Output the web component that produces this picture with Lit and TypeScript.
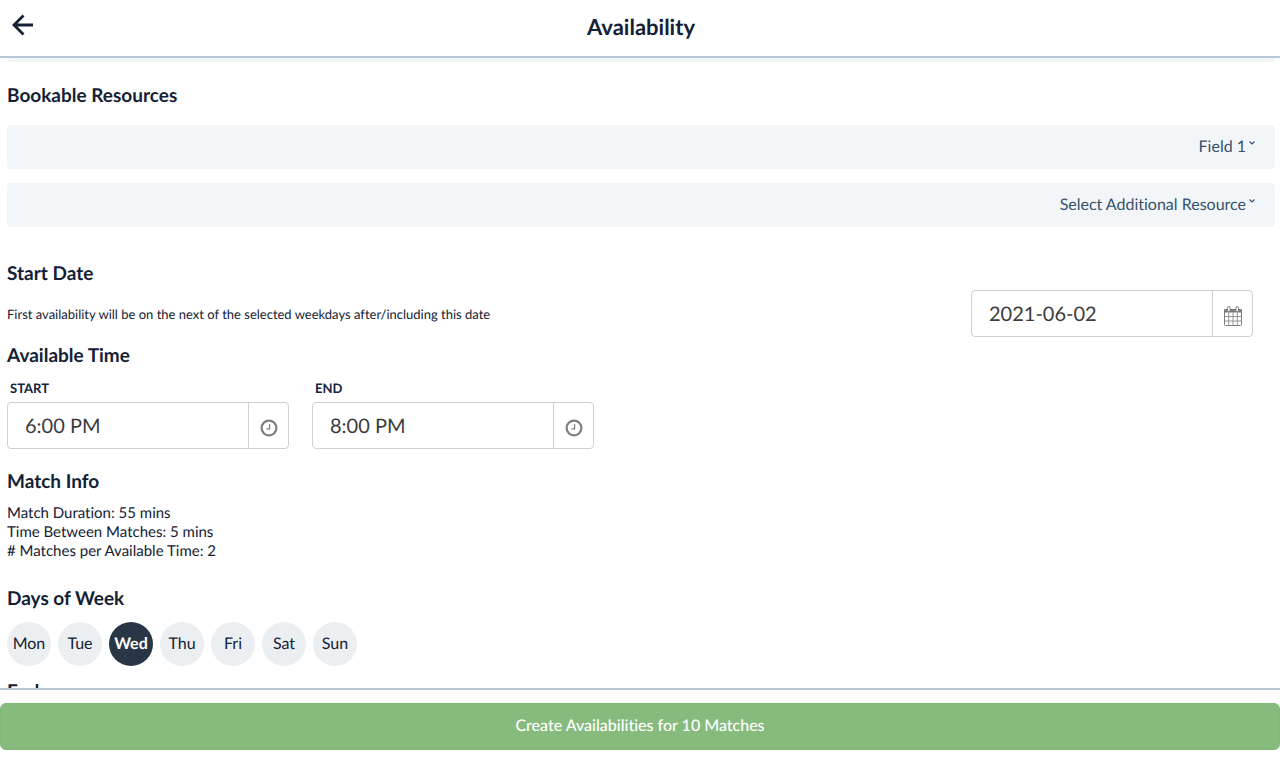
import { LitElement, html, css } from "lit";
import { customElement, property, state } from "lit/decorators.js";
import { classMap } from "lit/directives/class-map.js";

const calendarIcon = html`<svg class="glyph" viewBox="0 0 20 22" width="20" height="22" aria-hidden="true">
  <rect x="1.5" y="4.5" width="17" height="16" rx="1" fill="#fff" stroke="#7b7b7b" />
  <path d="M1 4.5h18v3H1z" fill="#7b7b7b" />
  <path d="M5.7 7.5v13M10 7.5v13M14.3 7.5v13M1.5 11.5h17M1.5 16h17" stroke="#8c8c8c" stroke-width="0.9" fill="none" />
  <rect x="4.5" y="1.5" width="2.6" height="5" rx="1.2" fill="#fff" stroke="#7b7b7b" />
  <rect x="12.9" y="1.5" width="2.6" height="5" rx="1.2" fill="#fff" stroke="#7b7b7b" />
</svg>`;

const clockIcon = html`<svg class="glyph" viewBox="0 0 18 18" width="18" height="18" aria-hidden="true">
  <circle cx="9" cy="9" r="7.4" fill="none" stroke="#7d7d7d" stroke-width="2.2" />
  <path d="M9.6 5v4.8H6.4" fill="none" stroke="#7d7d7d" stroke-width="1.2" />
</svg>`;

@customElement("picker-field")
class PickerField extends LitElement {
  @property() label = "";
  @property() value = "";
  @property() kind: "date" | "time" = "time";
  @property({ type: Boolean }) quiet = false;

  static styles = css`
    :host {
      display: block;
      width: 282px;
    }
    .caption {
      display: block;
      padding-left: 3px;
      margin-bottom: 5px;
      font-size: 13px;
      font-weight: 700;
      line-height: 18px;
      color: #14213a;
    }
    .group {
      display: flex;
      height: 47px;
      box-sizing: border-box;
      border: 1px solid #d0d0d0;
      border-radius: 4px;
      background: #fff;
      overflow: hidden;
    }
    .value {
      flex: 1;
      min-width: 0;
      box-sizing: border-box;
      border: 0;
      padding: 0 17px;
      font: 400 20px/24px Lato, sans-serif;
      text-rendering: geometricPrecision;
      color: #3c3c3c;
      background: none;
      outline-offset: -2px;
    }
    .open {
      display: flex;
      align-items: center;
      justify-content: center;
      width: 40px;
      padding: 5px 0 0;
      border: 0;
      border-left: 1px solid #d0d0d0;
      background: none;
      cursor: pointer;
    }
    .glyph {
      display: block;
    }
  `;

  render() {
    return html`
      ${this.quiet ? null : html`<label class="caption" for="value">${this.label}</label>`}
      <div class="group">
        <input class="value" id="value" type="text" .value=${this.value} aria-label=${this.label} />
        <button class="open" type="button" aria-label="Choose ${this.kind}">
          ${this.kind === "date" ? calendarIcon : clockIcon}
        </button>
      </div>
    `;
  }
}

@customElement("resource-select")
class ResourceSelect extends LitElement {
  @property() label = "";
  @property({ type: Array }) options: string[] = [];

  static styles = css`
    :host {
      display: block;
    }
    .box {
      display: grid;
      align-items: center;
      border-radius: 4px;
      background: #f2f6f9;
    }
    .choice {
      grid-area: 1 / 1;
      width: 100%;
      height: 44px;
      box-sizing: border-box;
      appearance: none;
      border: 0;
      border-radius: 4px;
      padding: 0 29px 0 16px;
      background: none;
      color: #36506f;
      font: 400 16px/24px Lato, sans-serif;
      font-variant-ligatures: none;
      text-rendering: geometricPrecision;
      text-align: right;
      text-align-last: right;
    }
    .caret {
      grid-area: 1 / 1;
      justify-self: end;
      margin: 0 20px 8px 0;
      pointer-events: none;
    }
  `;

  render() {
    return html`<div class="box">
      <select class="choice" aria-label=${this.label}>
        ${this.options.map((o) => html`<option>${o}</option>`)}
      </select>
      <svg class="caret" viewBox="0 0 6 4" width="6" height="4" aria-hidden="true">
        <path d="M0.5 0.5 3 3 5.5 0.5" fill="none" stroke="#36506f" stroke-width="1.1" />
      </svg>
    </div>`;
  }
}

@customElement("app-root")
class AppRoot extends LitElement {
  @state() private selected = new Set(["Wed"]);

  private days = ["Mon", "Tue", "Wed", "Thu", "Fri", "Sat", "Sun"];

  static styles = css`
    :host {
      display: flex;
      flex-direction: column;
      height: 100vh;
      overflow: hidden;
      background: #fff;
      color: #142135;
      font-family: Lato, sans-serif;
      font-size: 16px;
      font-variant-ligatures: none;
      text-rendering: geometricPrecision;
    }
    .top {
      display: grid;
      grid-template-columns: 44px 1fr 42px;
      align-items: center;
      height: 56px;
      flex: none;
      border-bottom: 2px solid #b9c8d6;
    }
    .back {
      display: block;
      padding: 0 0 6px 11px;
      border: 0;
      background: none;
      cursor: pointer;
    }
    .arrow {
      display: block;
    }
    .title {
      margin: 0;
      padding-bottom: 3px;
      text-align: center;
      font-size: 22px;
      font-weight: 700;
      line-height: 28px;
    }
    .content {
      flex: 1;
      min-height: 0;
      overflow: hidden;
      padding: 0 5px 0 7px;
    }
    .previous {
      height: 4px;
      border-radius: 0 0 4px 4px;
      background: #f2f6f9;
    }
    .heading {
      margin: 0;
      font-size: 19px;
      font-weight: 700;
      line-height: 24px;
    }
    .resources {
      display: grid;
      gap: 14px;
      padding: 22px 0 35px;
    }
    .resources .heading {
      margin-bottom: 3px;
    }
    .start {
      display: flex;
      justify-content: space-between;
      align-items: flex-end;
      padding-right: 22px;
      margin-bottom: 7px;
    }
    .hint {
      margin: 18px 0 13px;
      font-size: 13px;
      line-height: 20px;
    }
    .times {
      display: flex;
      gap: 23px;
      padding: 11px 0 21px;
    }
    .facts {
      margin: 0;
      padding: 10px 0 26px;
      list-style: none;
      font-size: 15px;
      line-height: 19px;
    }
    .days {
      display: flex;
      gap: 7px;
      padding: 11px 0 14px;
    }
    .day {
      width: 44px;
      height: 44px;
      padding: 0;
      border: 0;
      border-radius: 50%;
      background: #ebeff2;
      color: #142135;
      font: 400 16px/20px Lato, sans-serif;
      text-rendering: geometricPrecision;
      cursor: pointer;
    }
    .day.on {
      background: #2a3545;
      color: #fff;
      font-weight: 700;
    }
    .bottom {
      flex: none;
      border-top: 2px solid #b9c8d6;
      padding: 13px 0 12px;
    }
    .create {
      display: block;
      width: 100%;
      height: 47px;
      padding: 0 0 2px;
      border: 1px solid #7fb777;
      border-radius: 6px;
      background: #87bb7e;
      color: #fff;
      font: 500 16px/20px Lato, sans-serif;
      font-variant-ligatures: none;
      text-rendering: geometricPrecision;
      cursor: pointer;
    }
  `;

  private toggle(day: string) {
    const next = new Set(this.selected);
    if (!next.delete(day)) next.add(day);
    this.selected = next;
  }

  render() {
    return html`
      <header class="top">
        <button class="back" type="button" aria-label="Back">
          <svg class="arrow" viewBox="0 0 24 22" width="24" height="22" aria-hidden="true">
            <path d="M12.5 1.5 3 11l9.5 9.5M3 11h19" fill="none" stroke="#142135" stroke-width="2.8" />
          </svg>
        </button>
        <h1 class="title">Availability</h1>
      </header>

      <main class="content">
        <div class="previous"></div>
        <section class="resources">
          <h2 class="heading">Bookable Resources</h2>
          <resource-select label="Resource" .options=${["Field 1"]}></resource-select>
          <resource-select label="Additional resource" .options=${["Select Additional Resource"]}></resource-select>
        </section>

        <section class="start">
          <div>
            <h2 class="heading">Start Date</h2>
            <p class="hint">First availability will be on the next of the selected weekdays after/including this date</p>
          </div>
          <picker-field quiet kind="date" label="Start date" value="2021-06-02"></picker-field>
        </section>

        <h2 class="heading">Available Time</h2>
        <section class="times">
          <picker-field label="START" value="6:00 PM"></picker-field>
          <picker-field label="END" value="8:00 PM"></picker-field>
        </section>

        <h2 class="heading">Match Info</h2>
        <ul class="facts">
          <li>Match Duration: 55 mins</li>
          <li>Time Between Matches: 5 mins</li>
          <li># Matches per Available Time: 2</li>
        </ul>

        <h2 class="heading">Days of Week</h2>
        <div class="days">
          ${this.days.map(
            (d) => html`<button
              type="button"
              class=${classMap({ day: true, on: this.selected.has(d) })}
              aria-pressed=${this.selected.has(d)}
              @click=${() => this.toggle(d)}
            >${d}</button>`
          )}
        </div>

        <h2 class="heading">Ends</h2>
      </main>

      <footer class="bottom">
        <button class="create" type="button">Create Availabilities for 10 Matches</button>
      </footer>
    `;
  }
}
